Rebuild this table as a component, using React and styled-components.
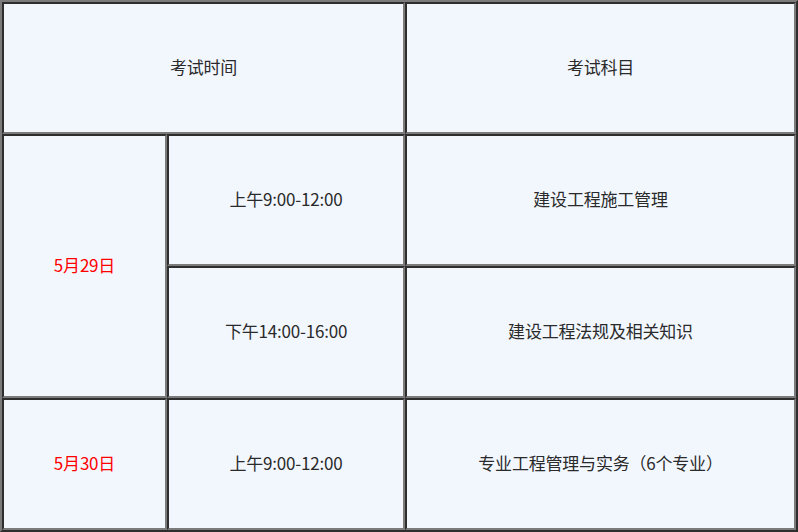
import React from "react";
import styled, { createGlobalStyle } from "styled-components";

const GlobalStyle = createGlobalStyle`
  html, body {
    margin: 0;
    padding: 0;
    background: #f2f7fe;
  }
`;

const Table = styled.table`
  width: 798px;
  height: 532px;
  border-collapse: separate;
  border-spacing: 0;
  table-layout: fixed;
  background: #f2f7fe;
  border-top: 2px solid #7b7b7b;
  border-left: 2px solid #7b7b7b;
  border-right: 2px solid #2e2e2e;
  border-bottom: 2px solid #2e2e2e;
  font-family: "Noto Sans CJK SC", "Noto Sans", sans-serif;
  font-size: 17px;
  color: #2a2a2a;
`;

const Cell = styled.td`
  text-align: center;
  vertical-align: middle;
  padding: 0 0 3px;
  height: 123px;
  border-top: 2px solid #2e2e2e;
  border-left: 2px solid #2e2e2e;
  border-bottom: 2px solid #7b7b7b;
  border-right: 2px solid #7b7b7b;
  color: ${(props) => (props.$red ? "#ff0000" : "#2a2a2a")};
  letter-spacing: -0.2px;
`;

const schedule = [
  {
    date: "5月29日",
    slots: [
      { time: "上午9:00-12:00", subject: "建设工程施工管理" },
      { time: "下午14:00-16:00", subject: "建设工程法规及相关知识" },
    ],
  },
  {
    date: "5月30日",
    slots: [{ time: "上午9:00-12:00", subject: "专业工程管理与实务（6个专业）" }],
  },
];

export default function App() {
  return (
    <>
      <GlobalStyle />
      <Table>
        <colgroup>
          <col style={{ width: "165px" }} />
          <col style={{ width: "238px" }} />
          <col />
        </colgroup>
        <tbody>
          <tr>
            <Cell colSpan={2}>考试时间</Cell>
            <Cell>考试科目</Cell>
          </tr>
          {schedule.map((day) =>
            day.slots.map((slot, index) => (
              <tr key={day.date + index}>
                {index === 0 && (
                  <Cell $red rowSpan={day.slots.length}>
                    {day.date}
                  </Cell>
                )}
                <Cell>{slot.time}</Cell>
                <Cell>{slot.subject}</Cell>
              </tr>
            ))
          )}
        </tbody>
      </Table>
    </>
  );
}
